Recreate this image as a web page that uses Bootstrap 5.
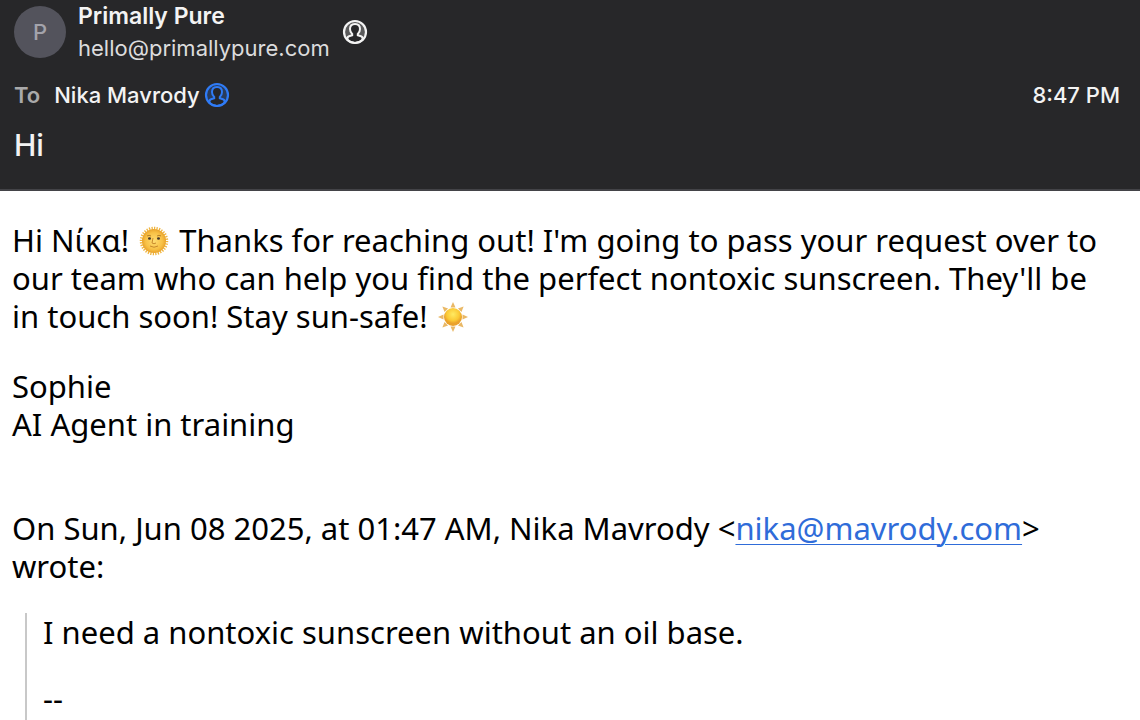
<!DOCTYPE html>
<html lang="en">
<head>
<meta charset="utf-8">
<meta name="viewport" content="width=device-width, initial-scale=1">
<title>Hi – Primally Pure</title>
<link href="https://cdn.jsdelivr.net/npm/bootstrap@5.3.0/dist/css/bootstrap.min.css" rel="stylesheet">
<style>
  body { font-family: "Noto Sans", "Open Sans", sans-serif; font-size: 31px; line-height: 38px; color: #000; background: #fff; }
  .mail-header { font-family: Inter, "Liberation Sans", sans-serif; font-size: 22px; line-height: 32px; font-weight: 500; color: #f3f3f3; background: #272729; border-bottom: 2px solid #434347; padding: 0 20px 24px 14px; }
  .sender-row { gap: 12px; }
  .recipient-row { gap: 14px; margin-top: 15px; }
  .avatar { width: 52px; height: 52px; background: #53535c; color: #a3a3ab; }
  .sender-name { font-size: 23px; font-weight: 600; }
  .sender-address { color: #dcdcdd; font-weight: 400; }
  .to-label { color: #a9a9aa; font-weight: 600; }
  .contact-icon { width: 26px; height: 26px; }
  .contact-blue { color: #2f7bf6; }
  .subject { font-size: 30px; line-height: 40px; font-weight: 500; margin: 14px 0 0; }
  .mail-body { padding: 30px 24px 0 12px; }
  .emoji { width: 30px; height: 30px; margin: 0 2px; vertical-align: -4px; }
  .mail-link { color: #2f6cd9; text-decoration-thickness: 1px; text-underline-offset: 4px; }
  .quote-intro { margin: 66px 0 0; }
  .quoted { font-size: inherit; border-left: 2px solid #c8c8c8; margin: 28px 0 0 13px; padding-left: 16px; }
  .signature-mark { margin: 28px 0 0; }
</style>
</head>
<body class="d-flex flex-column min-vh-100">
<svg class="d-none" aria-hidden="true">
  <symbol id="contact" viewBox="0 0 26 26">
    <circle cx="13" cy="13" r="11" fill="currentColor" fill-opacity=".25"/>
    <path d="M5.500 21v-1.800q0-1.500 1.500-2l3.200-1v-1.200C8.600 13.800 8 12 8 10c0-3 2-5 5-5s5 2 5 5c0 2-.6 3.800-2.200 5v1.200l3.200 1q1.500.5 1.500 2V21q-3.500 3-7.500 3t-7.500-3z" fill="#272729" stroke="currentColor" stroke-width="2"/>
    <circle cx="13" cy="13" r="11" fill="none" stroke="currentColor" stroke-width="2.200"/>
  </symbol>
</svg>

<header class="mail-header">
  <div class="sender-row d-flex align-items-center">
    <div class="avatar rounded-circle d-flex align-items-center justify-content-center flex-shrink-0">P</div>
    <div class="sender-text">
      <div class="sender-name">Primally Pure</div>
      <div class="sender-address">hello@primallypure.com</div>
    </div>
    <svg class="contact-icon flex-shrink-0" role="img" aria-label="Sender contact"><use href="#contact"/></svg>
  </div>
  <div class="recipient-row d-flex align-items-center">
    <span class="to-label">To</span>
    <span class="d-flex align-items-center gap-1">Nika Mavrody
      <svg class="contact-icon contact-blue flex-shrink-0" role="img" aria-label="Recipient contact"><use href="#contact"/></svg>
    </span>
    <time class="ms-auto">8:47 PM</time>
  </div>
  <h1 class="subject">Hi</h1>
</header>

<main class="mail-body flex-grow-1 d-flex flex-column">
  <p class="mb-0">Hi Νίκα!
    <svg class="emoji" viewBox="0 0 30 30" role="img" aria-label="Sun with face">
      <defs><radialGradient id="face"><stop offset="0" stop-color="#ffdc70"/><stop offset=".7" stop-color="#f8c146"/><stop offset="1" stop-color="#e9a32b"/></radialGradient></defs>
      <circle cx="15" cy="15" r="12.500" fill="none" stroke="#f0b43c" stroke-width="3.500" pathLength="64" stroke-dasharray="1 1"/>
      <circle cx="15" cy="15" r="12" fill="url(#face)"/>
      <path d="M8 10q2-1.500 4 0M18 10q2-1.500 4 0" fill="none" stroke="#b98026" stroke-width="1"/>
      <ellipse cx="10.500" cy="12.500" rx="1.500" ry="1.300" fill="#43372b"/><ellipse cx="19.500" cy="12.500" rx="1.500" ry="1.300" fill="#43372b"/>
      <path d="M14 12l-1 5q2 1.500 4 0M11 20q4 2.500 8 0" fill="none" stroke="#c98b2d" stroke-width="1"/>
    </svg>
    Thanks for reaching out! I'm going to pass your request over to our team who can help you find the perfect nontoxic sunscreen. They'll be in touch soon! Stay sun-safe!
    <svg class="emoji" viewBox="0 0 30 30" role="img" aria-label="Sun">
      <defs><radialGradient id="sun" cy=".35"><stop offset="0" stop-color="#ffea62"/><stop offset=".7" stop-color="#fbc934"/><stop offset="1" stop-color="#eaa22c"/></radialGradient></defs>
      <g fill="#e9b866"><path id="ray" d="M15 0l2.500 5.500h-5z"/><use href="#ray" transform="rotate(45 15 15)"/><use href="#ray" transform="rotate(90 15 15)"/><use href="#ray" transform="rotate(135 15 15)"/><use href="#ray" transform="rotate(180 15 15)"/><use href="#ray" transform="rotate(225 15 15)"/><use href="#ray" transform="rotate(270 15 15)"/><use href="#ray" transform="rotate(315 15 15)"/></g>
      <circle cx="15" cy="15" r="9" fill="url(#sun)"/>
    </svg>
  </p>
  <p class="mt-4 pt-2 mb-0">Sophie<br>AI Agent in training</p>
  <p class="quote-intro">On Sun, Jun 08 2025, at 01:47 AM, Nika Mavrody &lt;<a class="mail-link" href="mailto:nika@mavrody.com">nika@mavrody.com</a>&gt; wrote:</p>
  <blockquote class="quoted flex-grow-1">
    <p class="mb-0">I need a nontoxic sunscreen without an oil base.</p>
    <p class="signature-mark">--</p>
  </blockquote>
</main>
<script src="https://cdn.jsdelivr.net/npm/bootstrap@5.3.0/dist/js/bootstrap.bundle.min.js"></script>
</body>
</html>
